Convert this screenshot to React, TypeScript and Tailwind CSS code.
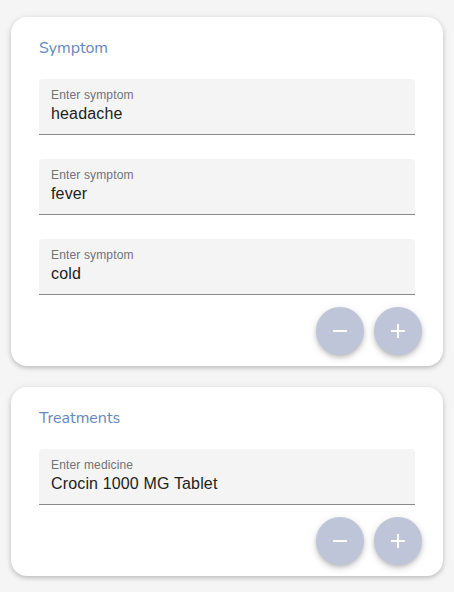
import React from 'react';

function RoundButton({ kind }: { kind: 'add' | 'remove' }) {
  return (
    <button className="w-12 h-12 rounded-full bg-[#bec5d8] flex items-center justify-center shadow-[0_2px_4px_-1px_rgba(0,0,0,0.18),0_4px_6px_0_rgba(0,0,0,0.1),0_1px_10px_0_rgba(0,0,0,0.08)]">
      <svg viewBox="0 0 24 24" className="w-6 h-6" fill="white">
        {kind === 'add' ? (
          <path d="M19 13h-6v6h-2v-6H5v-2h6V5h2v6h6v2z" />
        ) : (
          <path d="M19 13H5v-2h14v2z" />
        )}
      </svg>
    </button>
  );
}

function Field({ label, value }: { label: string; value: string }) {
  return (
    <div className="h-14 bg-[#f4f4f4] rounded-t-[4px] border-b border-[#8a8a8a] px-3 pt-[8px] font-['Liberation_Sans','Arial',sans-serif]">
      <div className="text-[12px] leading-4 text-[#727272] tracking-[0.15px]">{label}</div>
      <div className="text-[16px] leading-[22px] text-[#222] tracking-[0.15px]">{value}</div>
    </div>
  );
}

function Card({
  title,
  label,
  values,
}: {
  title: string;
  label: string;
  values: string[];
}) {
  return (
    <div className="bg-white rounded-2xl shadow-[0_2px_4px_rgba(0,0,0,0.18),0_1px_8px_rgba(0,0,0,0.08)] pt-[21px] px-7 pb-[11px]">
      <div className="text-[16px] leading-5 text-[#6688bd] font-['Nunito','Lato',sans-serif] mb-[21px]">
        {title}
      </div>
      <div className="flex flex-col gap-6">
        {values.map((v, i) => (
          <Field key={i} label={label} value={v} />
        ))}
      </div>
      <div className="flex justify-end gap-[10px] mt-3 -mr-[7px]">
        <RoundButton kind="remove" />
        <RoundButton kind="add" />
      </div>
    </div>
  );
}

export default function App() {
  return (
    <div className="min-h-screen bg-[#f5f5f5] pt-[17px] px-[11px] flex flex-col gap-[21px]">
      <Card title="Symptom" label="Enter symptom" values={['headache', 'fever', 'cold']} />
      <Card title="Treatments" label="Enter medicine" values={['Crocin 1000 MG Tablet']} />
    </div>
  );
}
